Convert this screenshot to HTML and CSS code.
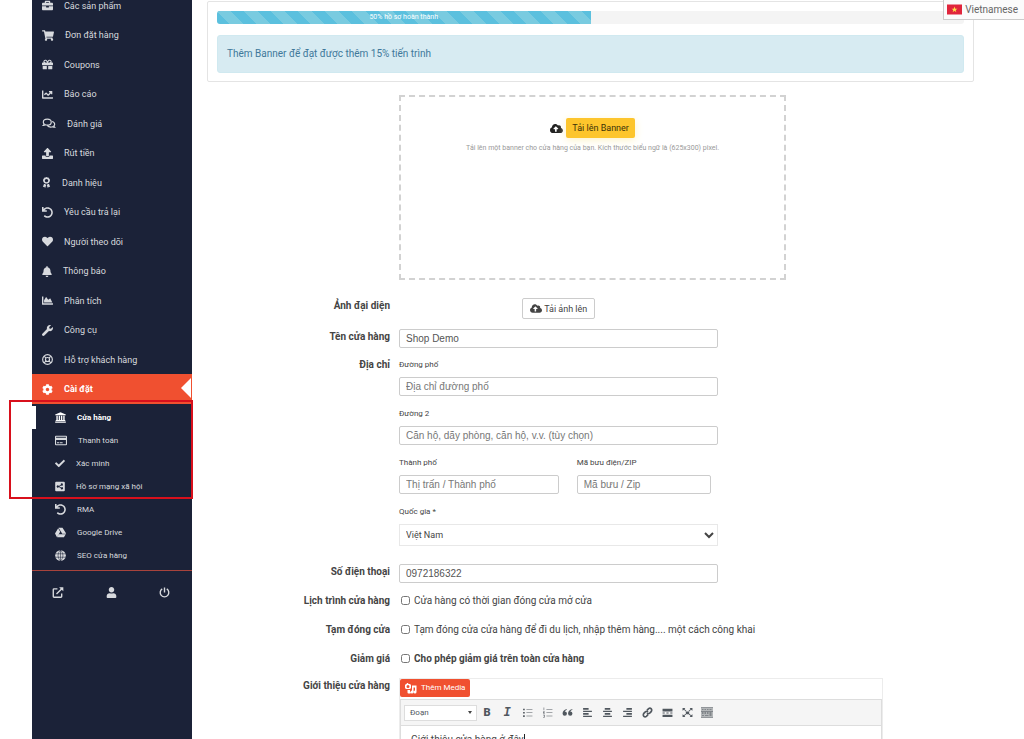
FILE: index.html
```html
<!DOCTYPE html>
<html lang="vi">
<head>
<meta charset="utf-8">
<title>Cài đặt cửa hàng</title>
<link rel="stylesheet" href="styles.css">
</head>
<body>
<svg class="sprite" aria-hidden="true">
  <symbol id="briefcase" viewBox="0 0 512 512"><path d="M320 336c0 8.840-7.160 16-16 16h-96c-8.840 0-16-7.160-16-16v-48H0v144c0 25.600 22.400 48 48 48h416c25.600 0 48-22.400 48-48V288H320v48zm144-208h-80V80c0-25.600-22.400-48-48-48H176c-25.600 0-48 22.400-48 48v48H48c-25.600 0-48 22.400-48 48v80h512v-80c0-25.600-22.400-48-48-48zm-144 0H192V96h128v32z"/></symbol>
  <symbol id="cart" viewBox="0 0 576 512"><path d="M528.12 301.319l47.273-208C578.806 78.301 567.391 64 551.99 64H159.208l-9.166-44.81C147.758 8.021 137.93 0 126.529 0H24C10.745 0 0 10.745 0 24v16c0 13.255 10.745 24 24 24h69.883l70.248 343.435C147.325 417.1 136 435.222 136 456c0 30.928 25.072 56 56 56s56-25.072 56-56c0-15.674-6.447-29.835-16.824-40h209.647C430.447 426.165 424 440.326 424 456c0 30.928 25.072 56 56 56s56-25.072 56-56c0-22.172-12.888-41.332-31.579-50.405l5.517-24.276c3.413-15.018-8.002-29.319-23.403-29.319H218.117l-6.545-32h293.145c11.206 0 20.92-7.754 23.403-18.681z"/></symbol>
  <symbol id="gift" viewBox="0 0 512 512"><path d="M32 448c0 17.700 14.300 32 32 32h160V320H32v128zm256 32h160c17.700 0 32-14.300 32-32V320H288v160zm192-320h-42.100c6.200-12.100 10.100-25.500 10.100-40 0-48.500-39.500-88-88-88-41.600 0-68.500 21.300-103 68.300-34.500-47-61.400-68.300-103-68.300-48.500 0-88 39.500-88 88 0 14.500 3.800 27.900 10.100 40H32c-17.700 0-32 14.300-32 32v80c0 8.800 7.200 16 16 16h480c8.800 0 16-7.200 16-16v-80c0-17.700-14.300-32-32-32zm-326.100 0c-22.100 0-40-17.900-40-40s17.900-40 40-40c19.900 0 34.600 3.300 86.100 80h-86.100zm206.100 0h-86.100c51.400-76.500 65.700-80 86.100-80 22.100 0 40 17.900 40 40s-17.900 40-40 40z"/></symbol>
  <symbol id="chart-line" viewBox="0 0 512 512"><path d="M496 384H64V80c0-8.840-7.160-16-16-16H16C7.160 64 0 71.160 0 80v336c0 17.670 14.330 32 32 32h464c8.840 0 16-7.160 16-16v-32c0-8.840-7.160-16-16-16zM464 96H345.940c-21.380 0-32.090 25.850-16.970 40.970l32.400 32.400L288 242.750l-73.370-73.370c-12.500-12.500-32.760-12.500-45.250 0l-68.690 68.690c-6.250 6.250-6.250 16.380 0 22.630l22.620 22.620c6.250 6.250 16.380 6.250 22.630 0L192 237.250l73.370 73.370c12.500 12.500 32.760 12.500 45.250 0l96-96 32.400 32.400c15.120 15.120 40.970 4.410 40.970-16.970V112c.01-8.840-7.150-16-15.990-16z"/></symbol>
  <symbol id="comments" viewBox="0 0 576 512"><path class="line" d="M208 56c-102 0-184 62-184 136 0 32 14 62 38 86-6 26-20 46-36 62 36 0 66-12 88-28 28 12 60 18 94 18 102 0 184-62 184-138S310 56 208 56zM432 160c70 18 120 66 120 126 0 32-14 60-38 84 6 26 20 46 36 62-36 0-66-12-88-28-28 12-60 18-94 18-66 0-122-24-154-62"/></symbol>
  <symbol id="upload" viewBox="0 0 512 512"><path d="M296 384h-80c-13.300 0-24-10.700-24-24V192h-87.700c-17.800 0-26.700-21.500-14.100-34.100L242.300 5.700c7.500-7.500 19.800-7.500 27.300 0l152.200 152.200c12.600 12.600 3.700 34.100-14.100 34.100H320v168c0 13.300-10.700 24-24 24zm216-8v112c0 13.300-10.700 24-24 24H24c-13.300 0-24-10.700-24-24V376c0-13.300 10.700-24 24-24h136v8c0 30.900 25.100 56 56 56h80c30.900 0 56-25.100 56-56v-8h136c13.300 0 24 10.700 24 24z"/></symbol>
  <symbol id="award" viewBox="0 0 384 512"><path fill-rule="evenodd" d="M192 0l44 20 48 2 24 42 38 30-4 48 18 46-34 34-14 48-48 14-36 30-36-8-36 8-36-30-48-14-14-48-34-34 18-46-4-48 38-30 24-42 48-2zM192 88a80 80 0 1 0 0 160 80 80 0 0 0 0-160zM78 318l58 16 44 38-52 136-40-50-64 4zM306 318l-58 16-44 38 52 136 40-50 64 4z"/></symbol>
  <symbol id="undo" viewBox="0 0 512 512"><path d="M212.333 224.333H12c-6.627 0-12-5.373-12-12V12C0 5.373 5.373 0 12 0h48c6.627 0 12 5.373 12 12v78.112C117.773 39.279 184.260 7.470 258.175 8.007c136.906.994 246.448 111.623 246.157 248.532C504.041 393.258 393.120 504 256.333 504c-64.089 0-122.496-24.313-166.510-64.215-5.099-4.622-5.334-12.554-.467-17.420l33.967-33.967c4.474-4.474 11.662-4.717 16.401-.525C170.760 415.336 211.580 432 256.333 432c97.268 0 176-78.716 176-176 0-97.267-78.716-176-176-176-58.496 0-110.280 28.476-142.274 72.333h98.274c6.627 0 12 5.373 12 12v48c0 6.627-5.373 12-12 12z"/></symbol>
  <symbol id="heart" viewBox="0 0 512 512"><path d="M462.300 62.600C407.500 15.900 326 24.300 275.700 76.200L256 96.500l-19.700-20.300C186.100 24.300 104.500 15.900 49.700 62.600c-62.800 53.600-66.100 149.800-9.900 207.900l193.500 199.800c12.500 12.900 32.800 12.900 45.300 0l193.500-199.800c56.300-58.100 53-154.300-9.800-207.900z"/></symbol>
  <symbol id="bell" viewBox="0 0 448 512"><path d="M224 512c35.320 0 63.970-28.650 63.970-64H160.030c0 35.350 28.650 64 63.970 64zm215.390-149.710c-19.320-20.760-55.470-51.990-55.470-154.290 0-77.700-54.480-139.900-127.940-155.160V32c0-17.670-14.320-32-31.980-32s-31.980 14.330-31.980 32v20.840C118.560 68.100 64.080 130.300 64.080 208c0 102.300-36.150 133.530-55.470 154.290-6 6.450-8.660 14.160-8.610 21.710.11 16.400 12.980 32 32.100 32h383.800c19.120 0 32-15.600 32.100-32 .05-7.550-2.610-15.270-8.610-21.710z"/></symbol>
  <symbol id="chart-area" viewBox="0 0 512 512"><path d="M500 384c6.600 0 12 5.400 12 12v40c0 6.600-5.400 12-12 12H12c-6.600 0-12-5.400-12-12V76c0-6.600 5.400-12 12-12h40c6.600 0 12 5.400 12 12v308h436zM372.700 159.500L288 216l-85.300-113.700c-5.100-6.800-15.500-6.300-19.900 1L96 248v104h384l-89.900-187.800c-3.200-6.500-11.400-8.700-17.400-4.700z"/></symbol>
  <symbol id="wrench" viewBox="0 0 512 512"><path d="M507.730 109.100c-2.240-9.030-13.540-12.090-20.120-5.510l-74.360 74.360-67.880-11.310-11.310-67.880 74.360-74.360c6.620-6.620 3.430-17.900-5.660-20.160-47.380-11.740-99.550.91-136.580 37.930-39.640 39.640-50.550 97.100-34.050 147.200L18.740 402.760c-24.990 24.990-24.990 65.510 0 90.500 24.990 24.990 65.510 24.990 90.500 0l213.210-213.210c50.120 16.710 107.470 5.680 147.370-34.220 37.070-37.070 49.700-89.320 37.910-136.730z"/></symbol>
  <symbol id="life-ring" viewBox="0 0 512 512"><path class="line" d="M256 30a226 226 0 1 0 0 452 226 226 0 0 0 0-452zM256 162a94 94 0 1 0 0 188 94 94 0 0 0 0-188zM98 98l92 92M414 98l-92 92M98 414l92-92M414 414l-92-92"/></symbol>
  <symbol id="cog" viewBox="0 0 512 512"><path d="M487.400 315.700l-42.600-24.600c4.300-23.200 4.300-47 0-70.200l42.600-24.600c4.900-2.800 7.100-8.600 5.500-14-11.100-35.600-30-67.800-54.700-94.600-3.800-4.100-10-5.100-14.800-2.300L380.800 110c-17.900-15.400-38.500-27.300-60.800-35.100V25.800c0-5.600-3.900-10.500-9.400-11.700-36.700-8.200-74.300-7.800-109.200 0-5.500 1.200-9.400 6.100-9.400 11.700V75c-22.200 7.900-42.800 19.800-60.800 35.100L88.700 85.500c-4.900-2.800-11-1.900-14.800 2.300-24.700 26.700-43.600 58.900-54.700 94.600-1.700 5.400.6 11.200 5.500 14L67.300 221c-4.300 23.200-4.300 47 0 70.200l-42.600 24.600c-4.900 2.800-7.100 8.600-5.500 14 11.100 35.600 30 67.800 54.700 94.600 3.800 4.100 10 5.100 14.800 2.300l42.600-24.600c17.900 15.400 38.500 27.300 60.800 35.100v49.200c0 5.600 3.900 10.500 9.400 11.700 36.700 8.200 74.300 7.800 109.200 0 5.500-1.200 9.400-6.100 9.400-11.700v-49.200c22.200-7.900 42.800-19.800 60.800-35.100l42.600 24.600c4.900 2.800 11 1.900 14.800-2.300 24.700-26.700 43.600-58.900 54.700-94.600 1.500-5.500-.7-11.300-5.600-14.100zM256 336c-44.100 0-80-35.900-80-80s35.900-80 80-80 80 35.900 80 80-35.900 80-80 80z"/></symbol>
  <symbol id="bank" viewBox="0 0 512 512"><path d="M256 16L8 112v40h496v-40zM64 176h64v192h44V176h64v192h40V176h64v192h44V176h64v192h30v48H34v-48h30zM8 440h496v56H8z"/></symbol>
  <symbol id="card" viewBox="0 0 576 512"><path fill-rule="evenodd" d="M48 32h480q48 0 48 48v352q0 48-48 48H48q-48 0-48-48V80q0-48 48-48zM52 80v44h472V80zM52 230v202h472V230zM96 336h100v50H96zM226 336h140v50H226z"/></symbol>
  <symbol id="check" viewBox="0 0 512 512"><path d="M173.898 439.404l-166.400-166.400c-9.997-9.997-9.997-26.206 0-36.204l36.203-36.204c9.997-9.998 26.207-9.998 36.204 0L192 312.690 432.095 72.596c9.997-9.997 26.207-9.997 36.204 0l36.203 36.204c9.997 9.997 9.997 26.206 0 36.204l-294.400 294.401c-9.998 9.997-26.207 9.997-36.204-.001z"/></symbol>
  <symbol id="share" viewBox="0 0 448 512"><path fill-rule="evenodd" d="M48 32h352q48 0 48 48v352q0 48-48 48H48q-48 0-48-48V80q0-48 48-48zM314 110a54 54 0 0 0-53 66l-90 54a54 54 0 1 0 0 52l90 54a54 54 0 1 0 18-34l-88-46 88-46a54 54 0 1 0 35-100z"/></symbol>
  <symbol id="drive" viewBox="0 0 512 512"><path d="M339 315L163 30h186l176 285zM147 60L0 306l92 166 150-250zM180 338l-78 142h312l88-142z"/></symbol>
  <symbol id="globe" viewBox="0 0 512 512"><path d="M256 8a248 248 0 1 0 0 496 248 248 0 0 0 0-496z"/><path class="cut" d="M256 0v512M0 176h512M0 336h512M256 8c-150 130-150 366 0 496M256 8c150 130 150 366 0 496"/></symbol>
  <symbol id="external" viewBox="0 0 512 512"><path class="line thick" d="M230 86H72q-36 0-36 36v320q0 36 36 36h320q36 0 36-36V300M186 326L456 56"/><path d="M310 8h194v194l-62-62-80-72z"/></symbol>
  <symbol id="user" viewBox="0 0 448 512"><path d="M224 256c70.700 0 128-57.300 128-128S294.700 0 224 0 96 57.300 96 128s57.300 128 128 128zm89.600 32h-16.700c-22.200 10.200-46.900 16-72.900 16s-50.600-5.800-72.900-16h-16.700C60.200 288 0 348.200 0 422.400V464c0 26.500 21.500 48 48 48h352c26.500 0 48-21.500 48-48v-41.600c0-74.200-60.200-134.400-134.400-134.400z"/></symbol>
  <symbol id="power" viewBox="0 0 512 512"><path class="line thick" d="M150 90a200 200 0 1 0 212 0M256 20v236"/></symbol>
  <symbol id="cloud" viewBox="0 0 640 512"><path d="M537.600 226.600c4.100-10.700 6.400-22.400 6.400-34.600 0-53-43-96-96-96-19.700 0-38.100 6-53.300 16.200C367 64.200 315.300 32 256 32c-88.400 0-160 71.600-160 160 0 2.700.1 5.400.2 8.100C40.200 219.800 0 273.200 0 336c0 79.500 64.500 144 144 144h368c70.700 0 128-57.300 128-128 0-61.900-44-113.600-102.400-125.400zM393.400 288H328v112c0 8.800-7.200 16-16 16h-48c-8.800 0-16-7.200-16-16V288h-65.400c-14.300 0-21.400-17.200-11.300-27.300l105.400-105.400c6.200-6.200 16.400-6.200 22.600 0l105.400 105.400c10.100 10.100 2.900 27.300-11.300 27.300z"/></symbol>
  <symbol id="media" viewBox="0 0 24 22"><path fill-rule="evenodd" d="M4 0h2l1 2h3l2 2v6l-2 2H2l-2-2V4l2-2h1zM6 4a3 3 0 1 0 0 6 3 3 0 0 0 0-6zM14 5h9v13a3 3 0 1 1-3-3V9h-3v9a3 3 0 1 1-3-3zM5 14h5v4h1v3H7q-2 0-2-2z"/></symbol>
  <symbol id="ul" viewBox="0 0 20 20"><path d="M2 3h3v3H2zM2 9h3v3H2zM2 15h3v3H2zM8 4h11v1H8zM8 10h11v1H8zM8 16h11v1H8z"/></symbol>
  <symbol id="ol" viewBox="0 0 20 20"><path d="M3 1h1v5H3zM2 8h3v2H4l-1 1h2v1H2v-2l1-1H2zM2 14h3v5H2v-1h2v-1H3v-1h1v-1H2zM8 4h11v1H8zM8 10h11v1H8zM8 16h11v1H8z"/></symbol>
  <symbol id="quote" viewBox="0 0 20 20"><path d="M9 4C5 4 1 7 1 12a4 4 0 1 0 4-4q1-2 4-3zM19 4c-4 0-8 3-8 8a4 4 0 1 0 4-4q1-2 4-3z"/></symbol>
  <symbol id="left" viewBox="0 0 20 20"><path d="M2 2h10v3H2zM2 7h16v2H2zM2 11h10v3H2zM2 16h16v2H2z"/></symbol>
  <symbol id="center" viewBox="0 0 20 20"><path d="M5 2h10v3H5zM2 7h16v2H2zM5 11h10v3H5zM2 16h16v2H2z"/></symbol>
  <symbol id="right" viewBox="0 0 20 20"><path d="M8 2h10v3H8zM2 7h16v2H2zM8 11h10v3H8zM2 16h16v2H2z"/></symbol>
  <symbol id="link" viewBox="0 0 20 20"><path class="pen" d="M9 6l3-3q2.500-2 4.500 0t.5 5l-3 3q-2.500 2-5 0M11 14l-3 3q-2.500 2-4.500 0t-.5-5l3-3q2.500-2 5 0"/></symbol>
  <symbol id="more" viewBox="0 0 20 20"><path d="M1 3h18v5H1zM1 10h4v2H1zM8 10h4v2H8zM15 10h4v2h-4zM1 14h18v4H1z"/></symbol>
  <symbol id="expand" viewBox="0 0 20 20"><path d="M7 8h6v5H7zM1 2h5L4.500 4 8 7 7 8 3.500 5 1 7zM19 2h-5l1.500 2L12 7l1 1 3.500-3L19 7zM1 18h5l-1.500-2L8 13l-1-1-3.500 3L1 13zM19 18h-5l1.500-2-3.500-3 1-1 3.500 3 2.500-2z"/></symbol>
  <symbol id="keys" viewBox="0 0 24 20"><path class="soft" d="M0 0h24v20H0z"/><path d="M0 0h24v1H0zM0 19h24v1H0zM0 7h24v1H0zM2 3h3v1H2zM7 3h3v1H7zM12 3h3v1h-3zM17 3h4v1h-4zM2 10h3v2H2zM7 10h3v2H7zM12 10h3v2h-3zM17 10h4v2h-4zM2 15h4v1H2zM8 15h7v1H8zM17 14h4v2h-4z"/></symbol>
</svg>

<div class="page">
  <aside class="sidebar">
    <nav class="menu">
      <a class="item" href="#"><svg class="ico"><use href="#briefcase"/></svg>Các sản phẩm</a>
      <a class="item" href="#"><svg class="ico w12"><use href="#cart"/></svg>Đơn đặt hàng</a>
      <a class="item" href="#"><svg class="ico"><use href="#gift"/></svg>Coupons</a>
      <a class="item" href="#"><svg class="ico"><use href="#chart-line"/></svg>Báo cáo</a>
      <a class="item" href="#"><svg class="ico w14"><use href="#comments"/></svg>Đánh giá</a>
      <a class="item" href="#"><svg class="ico"><use href="#upload"/></svg>Rút tiền</a>
      <a class="item" href="#"><svg class="ico w9"><use href="#award"/></svg>Danh hiệu</a>
      <a class="item" href="#"><svg class="ico"><use href="#undo"/></svg>Yêu cầu trả lại</a>
      <a class="item" href="#"><svg class="ico"><use href="#heart"/></svg>Người theo dõi</a>
      <a class="item" href="#"><svg class="ico w10"><use href="#bell"/></svg>Thông báo</a>
      <a class="item" href="#"><svg class="ico"><use href="#chart-area"/></svg>Phân tích</a>
      <a class="item" href="#"><svg class="ico"><use href="#wrench"/></svg>Công cụ</a>
      <a class="item" href="#"><svg class="ico"><use href="#life-ring"/></svg>Hỗ trợ khách hàng</a>
      <a class="item active" href="#"><svg class="ico"><use href="#cog"/></svg>Cài đặt</a>
    </nav>
    <nav class="submenu">
      <a class="sub current" href="#"><svg class="ico"><use href="#bank"/></svg>Cửa hàng</a>
      <a class="sub" href="#"><svg class="ico w12"><use href="#card"/></svg>Thanh toán</a>
      <a class="sub" href="#"><svg class="ico w10"><use href="#check"/></svg>Xác minh</a>
      <a class="sub" href="#"><svg class="ico w10"><use href="#share"/></svg>Hồ sơ mạng xã hội</a>
      <a class="sub" href="#"><svg class="ico"><use href="#undo"/></svg>RMA</a>
      <a class="sub" href="#"><svg class="ico"><use href="#drive"/></svg>Google Drive</a>
      <a class="sub" href="#"><svg class="ico"><use href="#globe"/></svg>SEO cửa hàng</a>
      <span class="highlight"></span>
    </nav>
    <div class="shortcuts">
      <a href="#" aria-label="Xem cửa hàng"><svg class="ico w12"><use href="#external"/></svg></a>
      <a href="#" aria-label="Tài khoản"><svg class="ico"><use href="#user"/></svg></a>
      <a href="#" aria-label="Đăng xuất"><svg class="ico"><use href="#power"/></svg></a>
    </div>
  </aside>

  <main class="content">
    <section class="card">
      <div class="progress"><div class="bar" style="width:50%">50% hồ sơ hoàn thành</div></div>
      <div class="alert">Thêm Banner để đạt được thêm 15% tiến trình</div>
    </section>

    <form class="form">
      <div class="row">
        <div class="field banner">
          <div class="upload"><svg class="ico w13"><use href="#cloud"/></svg><button class="btn-banner" type="button">Tải lên Banner</button></div>
          <p class="hint">Tải lên một banner cho cửa hàng của bạn. Kích thước biểu ngữ là (625x300) pixel.</p>
        </div>
      </div>
      <div class="row avatar">
        <span class="label">Ảnh đại diện</span>
        <div class="field avatar-field"><button class="btn-avatar" type="button"><svg class="ico w12"><use href="#cloud"/></svg>Tải ảnh lên</button></div>
      </div>
      <div class="row">
        <label class="label" for="shop">Tên cửa hàng</label>
        <div class="field"><input class="text" id="shop" type="text" value="Shop Demo"></div>
      </div>
      <div class="row address">
        <span class="label">Địa chỉ</span>
        <div class="field stack">
          <div class="group"><label for="street">Đường phố</label><input class="text" id="street" type="text" placeholder="Địa chỉ đường phố"></div>
          <div class="group"><label for="street2">Đường 2</label><input class="text" id="street2" type="text" placeholder="Căn hộ, dãy phòng, căn hộ, v.v. (tùy chọn)"></div>
          <div class="pair">
            <div class="group"><label for="city">Thành phố</label><input class="text" id="city" type="text" placeholder="Thị trấn / Thành phố"></div>
            <div class="group"><label for="zip">Mã bưu điện/ZIP</label><input class="text" id="zip" type="text" placeholder="Mã bưu / Zip"></div>
          </div>
          <div class="group"><label for="country">Quốc gia *</label><select class="select" id="country"><option>Việt Nam</option></select></div>
        </div>
      </div>
      <div class="row phone">
        <label class="label" for="phone">Số điện thoại</label>
        <div class="field"><input class="text" id="phone" type="text" value="0972186322"></div>
      </div>
      <div class="row">
        <span class="label">Lịch trình cửa hàng</span>
        <label class="check"><input type="checkbox">Cửa hàng có thời gian đóng cửa mở cửa</label>
      </div>
      <div class="row spaced">
        <span class="label">Tạm đóng cửa</span>
        <label class="check"><input type="checkbox">Tạm đóng cửa cửa hàng để đi du lịch, nhập thêm hàng.... một cách công khai</label>
      </div>
      <div class="row spaced">
        <span class="label">Giảm giá</span>
        <label class="check strong"><input type="checkbox">Cho phép giảm giá trên toàn cửa hàng</label>
      </div>
      <div class="row intro">
        <span class="label">Giới thiệu cửa hàng</span>
        <div class="editor">
          <button class="btn-media" type="button"><svg class="ico w12"><use href="#media"/></svg>Thêm Media</button>
          <div class="toolbar">
            <button class="format" type="button">Đoạn<span class="caret"></span></button>
            <button class="tool bold" type="button">B</button>
            <button class="tool italic" type="button">I</button>
            <button class="tool" type="button" aria-label="Danh sách"><svg class="ico"><use href="#ul"/></svg></button>
            <button class="tool" type="button" aria-label="Danh sách số"><svg class="ico"><use href="#ol"/></svg></button>
            <button class="tool" type="button" aria-label="Trích dẫn"><svg class="ico"><use href="#quote"/></svg></button>
            <button class="tool" type="button" aria-label="Căn trái"><svg class="ico"><use href="#left"/></svg></button>
            <button class="tool" type="button" aria-label="Căn giữa"><svg class="ico"><use href="#center"/></svg></button>
            <button class="tool" type="button" aria-label="Căn phải"><svg class="ico"><use href="#right"/></svg></button>
            <button class="tool" type="button" aria-label="Liên kết"><svg class="ico"><use href="#link"/></svg></button>
            <button class="tool" type="button" aria-label="Đọc tiếp"><svg class="ico"><use href="#more"/></svg></button>
            <button class="tool" type="button" aria-label="Toàn màn hình"><svg class="ico"><use href="#expand"/></svg></button>
            <button class="tool" type="button" aria-label="Bàn phím"><svg class="ico w12"><use href="#keys"/></svg></button>
          </div>
          <div class="canvas" contenteditable="true">Giới thiệu cửa hàng ở đây<span class="cursor"></span></div>
        </div>
      </div>
    </form>
  </main>
</div>

<div class="language">
  <svg class="flag" viewBox="0 0 30 20"><path fill="#e0253c" d="M0 0h30v20H0z"/><path fill="#ffe14a" d="M15 4l1.500 4.300H21l-3.600 2.700 1.300 4.400-3.700-2.700-3.700 2.700 1.300-4.400L9 8.300h4.500z"/></svg>
  Vietnamese
</div>
</body>
</html>
```

FILE: styles.css
```css
* {
  box-sizing: border-box;
}

body {
  margin: 0;
  height: 100vh;
  overflow: hidden;
  background: #fff;
  color: #444;
  font: 10px/16px Roboto, "Liberation Sans", sans-serif;
}

a {
  color: inherit;
  text-decoration: none;
}

button,
input,
select {
  font: inherit;
  color: inherit;
  margin: 0;
}

.sprite {
  position: absolute;
  width: 0;
  height: 0;
}

.ico {
  flex: none;
  width: 11px;
  height: 11px;
  fill: currentColor;
}

.w9 { width: 9px; }
.w10 { width: 10px; }
.w12 { width: 12px; }
.w13 { width: 13px; }
.w14 { width: 14px; }

.line {
  fill: none;
  stroke: currentColor;
  stroke-width: 54;
}

.thick { stroke-width: 64; }

.cut {
  fill: none;
  stroke: #1b2238;
  stroke-width: 26;
}

.pen {
  fill: none;
  stroke: currentColor;
  stroke-width: 3;
}

.soft { fill: #b4b7b9; }

.page {
  display: flex;
  min-height: 100%;
  padding-left: 32px;
}

/* Sidebar */

.sidebar {
  flex: 0 0 160px;
  background: #1b2238;
  color: #d8dade;
  font-size: 9px;
}

.menu {
  margin-top: -9px;
}

.item {
  display: flex;
  align-items: center;
  gap: 11px;
  height: 29px;
  padding-left: 10px;
}

.item:nth-child(even) {
  height: 30px;
}

.active {
  position: relative;
  background: #f05030;
  color: #fff;
  font-weight: 700;
}

.active::after {
  content: "";
  position: absolute;
  right: 1px;
  top: 4px;
  border: 10px solid transparent;
  border-right-color: #fff;
  border-left: 0;
}

.submenu {
  position: relative;
  padding: 2px 0 3px;
  border-bottom: 1px solid #a8433c;
  font-size: 8px;
}

.sub {
  display: flex;
  align-items: center;
  gap: 11px;
  height: 23px;
  padding-left: 23px;
}

.current {
  color: #fff;
  font-weight: 700;
  box-shadow: inset 4px 0 0 #fff;
}

.highlight {
  position: absolute;
  left: -23px;
  right: -1px;
  top: -4px;
  height: 99px;
  border: 2px solid #d8101c;
  pointer-events: none;
}

.shortcuts {
  display: flex;
  justify-content: space-between;
  padding: 16px 22px 16px 20px;
}

.shortcuts a {
  display: flex;
}

/* Content */

.content {
  flex: 1;
  min-width: 0;
  padding: 1px 50px 0 15px;
}

.card {
  padding: 9px 9px 8px;
  border: 1px solid #e4e4e4;
  border-radius: 2px;
}

.progress {
  height: 13px;
  background: #f4f4f4;
  border-radius: 3px;
  overflow: hidden;
}

.bar {
  height: 100%;
  color: #fff;
  font-size: 7px;
  line-height: 12px;
  text-align: center;
  background: #5bc0de linear-gradient(45deg, #79cbe0 25%, transparent 25%, transparent 50%, #79cbe0 50%, #79cbe0 75%, transparent 75%) 0 0 / 27px 27px;
}

.alert {
  margin-top: 11px;
  padding: 10px 9px;
  border: 1px solid #d0e9f0;
  border-radius: 3px;
  background: #d7ebf2;
  color: #40789a;
}

.form {
  padding: 13px 91px 0 0;
}

.row {
  display: grid;
  grid-template-columns: 183px minmax(0, 1fr);
  column-gap: 9px;
  margin-bottom: 9px;
}

.label {
  font-weight: 700;
  text-align: right;
}

.field {
  grid-column: 2;
  width: 66%;
}

.banner {
  width: 80%;
  height: 185px;
  margin-bottom: 9px;
  padding-top: 21px;
  border: 2px dashed #d2d2d2;
  text-align: center;
}

.upload {
  display: flex;
  align-items: center;
  justify-content: center;
  gap: 3px;
  color: #222;
}

.btn-banner {
  height: 20px;
  padding: 0 6px;
  border: 0;
  border-radius: 2px;
  background: #fdc52c;
  box-shadow: 0 2px 8px #fdf3c8;
  color: #3c3208;
  font-size: 9px;
}

.hint {
  margin: 2px 0 0;
  color: #999;
  font-size: 7px;
}

.avatar {
  margin-bottom: 10px;
}

.avatar-field {
  text-align: center;
}

.btn-avatar {
  display: inline-flex;
  align-items: center;
  gap: 2px;
  height: 21px;
  padding: 0 7px;
  border: 1px solid #ccc;
  border-radius: 2px;
  background: #fff;
  font-size: 9px;
  vertical-align: top;
}

.text {
  display: block;
  width: 100%;
  height: 19px;
  padding: 0 6px;
  border: 1px solid #ccc;
  border-radius: 2px;
  background: #fff;
  color: #555;
  font: 10px/16px "Liberation Sans", sans-serif;
}

.text::placeholder {
  color: #777;
}

.address {
  margin-top: 9px;
}

.stack {
  display: grid;
  gap: 10px;
}

.group {
  display: grid;
  gap: 4px;
  font-size: 8px;
}

.pair {
  display: grid;
  grid-template-columns: 50% 42%;
  gap: 18px;
}

.select {
  width: 100%;
  height: 22px;
  padding: 0 2px;
  border: 1px solid #e8e8e8;
  background: #fff;
  font-size: 9px;
}

.phone {
  margin-top: 18px;
  margin-bottom: 10px;
}

.check {
  display: flex;
  align-items: center;
  gap: 4px;
}

.check input {
  width: 9px;
  height: 9px;
  margin: 0 0 1px 2px;
}

.strong {
  font-weight: 700;
}

.spaced {
  margin-top: 13px;
}

.intro {
  margin-top: 11px;
}

.editor {
  border: 1px solid #ececec;
}

.btn-media {
  display: flex;
  align-items: center;
  gap: 4px;
  height: 18px;
  padding: 0 5px;
  border: 0;
  border-radius: 2px;
  background: #f05030;
  color: #fff;
  font-size: 8px;
}

.toolbar {
  display: flex;
  align-items: center;
  height: 27px;
  margin-top: 2px;
  padding-left: 3px;
  border: 1px solid #ddd;
  background: #f5f5f5;
  color: #50575e;
}

.format {
  display: flex;
  align-items: center;
  justify-content: space-between;
  width: 73px;
  height: 16px;
  padding: 0 4px 0 5px;
  border: 1px solid #ddd;
  background: #fff;
  font-size: 8px;
}

.caret {
  border: 2px solid transparent;
  border-top: 3px solid #444;
  border-bottom: 0;
}

.tool {
  display: flex;
  align-items: center;
  justify-content: center;
  width: 20px;
  height: 20px;
  padding: 0;
  border: 0;
  background: none;
}

.bold {
  font-size: 11px;
  font-weight: 900;
}

.italic {
  font: italic 700 12px "Liberation Mono", monospace;
}

.canvas {
  padding: 6px 10px;
  border: 1px solid #ddd;
  border-top: 0;
}

.cursor {
  display: inline-block;
  height: 9px;
  border-left: 1px solid #222;
}

/* Language switcher fixed over the page corner */

.language {
  position: fixed;
  top: 0;
  right: 0;
  display: flex;
  align-items: center;
  gap: 3px;
  height: 20px;
  padding: 0 6px 0 3px;
  border: 1px solid #ccc;
  border-width: 0 0 1px 1px;
  background: #fbfbfb;
  color: #666;
}

.flag {
  width: 15px;
  height: 11px;
}
```
